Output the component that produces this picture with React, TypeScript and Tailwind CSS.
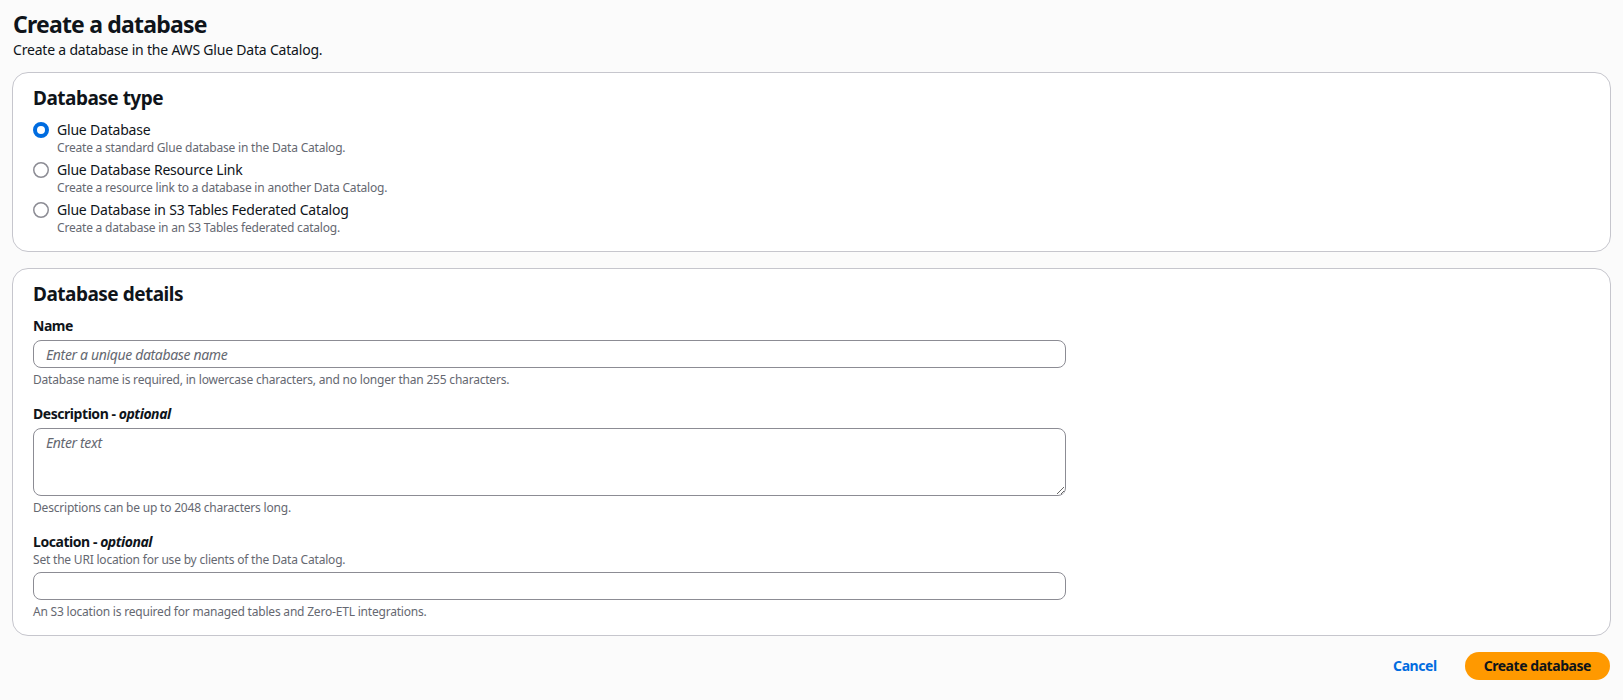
import React, { useState } from 'react'

type DbType = 'standard' | 'link' | 's3tables'

const DB_TYPES: { id: DbType; label: string; description: string }[] = [
  {
    id: 'standard',
    label: 'Glue Database',
    description: 'Create a standard Glue database in the Data Catalog.',
  },
  {
    id: 'link',
    label: 'Glue Database Resource Link',
    description: 'Create a resource link to a database in another Data Catalog.',
  },
  {
    id: 's3tables',
    label: 'Glue Database in S3 Tables Federated Catalog',
    description: 'Create a database in an S3 Tables federated catalog.',
  },
]

function Radio({ checked }: { checked: boolean }) {
  return (
    <span className="mt-[2px] flex h-4 w-4 shrink-0 items-center justify-center">
      {checked ? (
        <svg width="16" height="16" viewBox="0 0 16 16">
          <circle cx="8" cy="8" r="6" fill="#ffffff" stroke="#006ce0" strokeWidth="4" />
        </svg>
      ) : (
        <svg width="16" height="16" viewBox="0 0 16 16">
          <circle cx="8" cy="8" r="7.25" fill="#ffffff" stroke="#8c8c94" strokeWidth="1.5" />
        </svg>
      )}
    </span>
  )
}

function Panel({ title, children }: { title: string; children: React.ReactNode }) {
  return (
    <section className="rounded-2xl border border-[#c6c6cd] bg-white px-5 pt-[13px] pb-[15px]">
      <h2 className="mb-[10px] text-[19px] leading-6 font-bold tracking-[-0.5px] text-[#0f141a]">{title}</h2>
      {children}
    </section>
  )
}

function Field({
  label,
  optional,
  description,
  hint,
  children,
}: {
  label: string
  optional?: boolean
  description?: string
  hint?: string
  children: React.ReactNode
}) {
  return (
    <div className="flex flex-col">
      <label className="text-sm leading-5 font-bold tracking-[-0.45px] text-[#0f141a]">
        {label}
        {optional && (
          <>
            {' - '}
            <i>optional</i>
          </>
        )}
      </label>
      {description && <p className="text-xs leading-4 text-[#656871]">{description}</p>}
      <div className="mt-1">{children}</div>
      {hint && <p className="mt-1 text-xs leading-4 text-[#656871]">{hint}</p>}
    </div>
  )
}

const inputCls =
  'block w-[1033px] rounded-lg border border-[#8c8c94] bg-white px-3 text-sm text-[#0f141a] outline-none placeholder:italic placeholder:tracking-[-0.35px] placeholder:text-[#656871] focus:border-[#006ce0]'

export default function App() {
  const [dbType, setDbType] = useState<DbType>('standard')
  const [name, setName] = useState('')
  const [description, setDescription] = useState('')
  const [location, setLocation] = useState('')

  return (
    <div
      className="min-h-screen bg-[#fbfbfb] px-3 pt-[9px] pb-5 tracking-[-0.2px] text-[#0f141a]"
      style={{ fontFamily: '"Noto Sans", "Open Sans", Arial, sans-serif' }}
    >
      <header className="mb-3 px-px">
        <h1 className="text-[23px] leading-[30px] font-bold tracking-[-0.8px]">Create a database</h1>
        <p className="mt-px text-sm leading-5">Create a database in the AWS Glue Data Catalog.</p>
      </header>

      <div className="flex flex-col gap-4">
        <Panel title="Database type">
          <div className="flex flex-col gap-1">
            {DB_TYPES.map((t) => (
              <label
                key={t.id}
                className="flex cursor-pointer items-start gap-2"
                onClick={() => setDbType(t.id)}
              >
                <Radio checked={dbType === t.id} />
                <span className="flex flex-col">
                  <span className="text-sm leading-5">{t.label}</span>
                  <span className="text-xs leading-4 text-[#656871]">{t.description}</span>
                </span>
              </label>
            ))}
          </div>
        </Panel>

        <Panel title="Database details">
          <div className="flex flex-col gap-4">
            <Field
              label="Name"
              hint="Database name is required, in lowercase characters, and no longer than 255 characters."
            >
              <input
                className={`${inputCls} h-7`}
                placeholder="Enter a unique database name"
                value={name}
                onChange={(e) => setName(e.target.value)}
              />
            </Field>

            <Field label="Description" optional hint="Descriptions can be up to 2048 characters long.">
              <textarea
                className={`${inputCls} h-[68px] py-1 leading-5`}
                placeholder="Enter text"
                value={description}
                onChange={(e) => setDescription(e.target.value)}
              />
            </Field>

            <Field
              label="Location"
              optional
              description="Set the URI location for use by clients of the Data Catalog."
              hint="An S3 location is required for managed tables and Zero-ETL integrations."
            >
              <input
                className={`${inputCls} h-7`}
                value={location}
                onChange={(e) => setLocation(e.target.value)}
              />
            </Field>
          </div>
        </Panel>
      </div>

      <div className="mt-4 flex items-center justify-end gap-2 pr-px">
        <button className="h-7 rounded-full px-5 text-sm font-bold tracking-[-0.45px] text-[#006ce0] hover:text-[#004a9e]">
          Cancel
        </button>
        <button className="h-7 rounded-full bg-[#ff9900] px-[19px] text-sm font-bold tracking-[-0.45px] text-[#0f141a] hover:bg-[#fa6f00]">
          Create database
        </button>
      </div>
    </div>
  )
}
